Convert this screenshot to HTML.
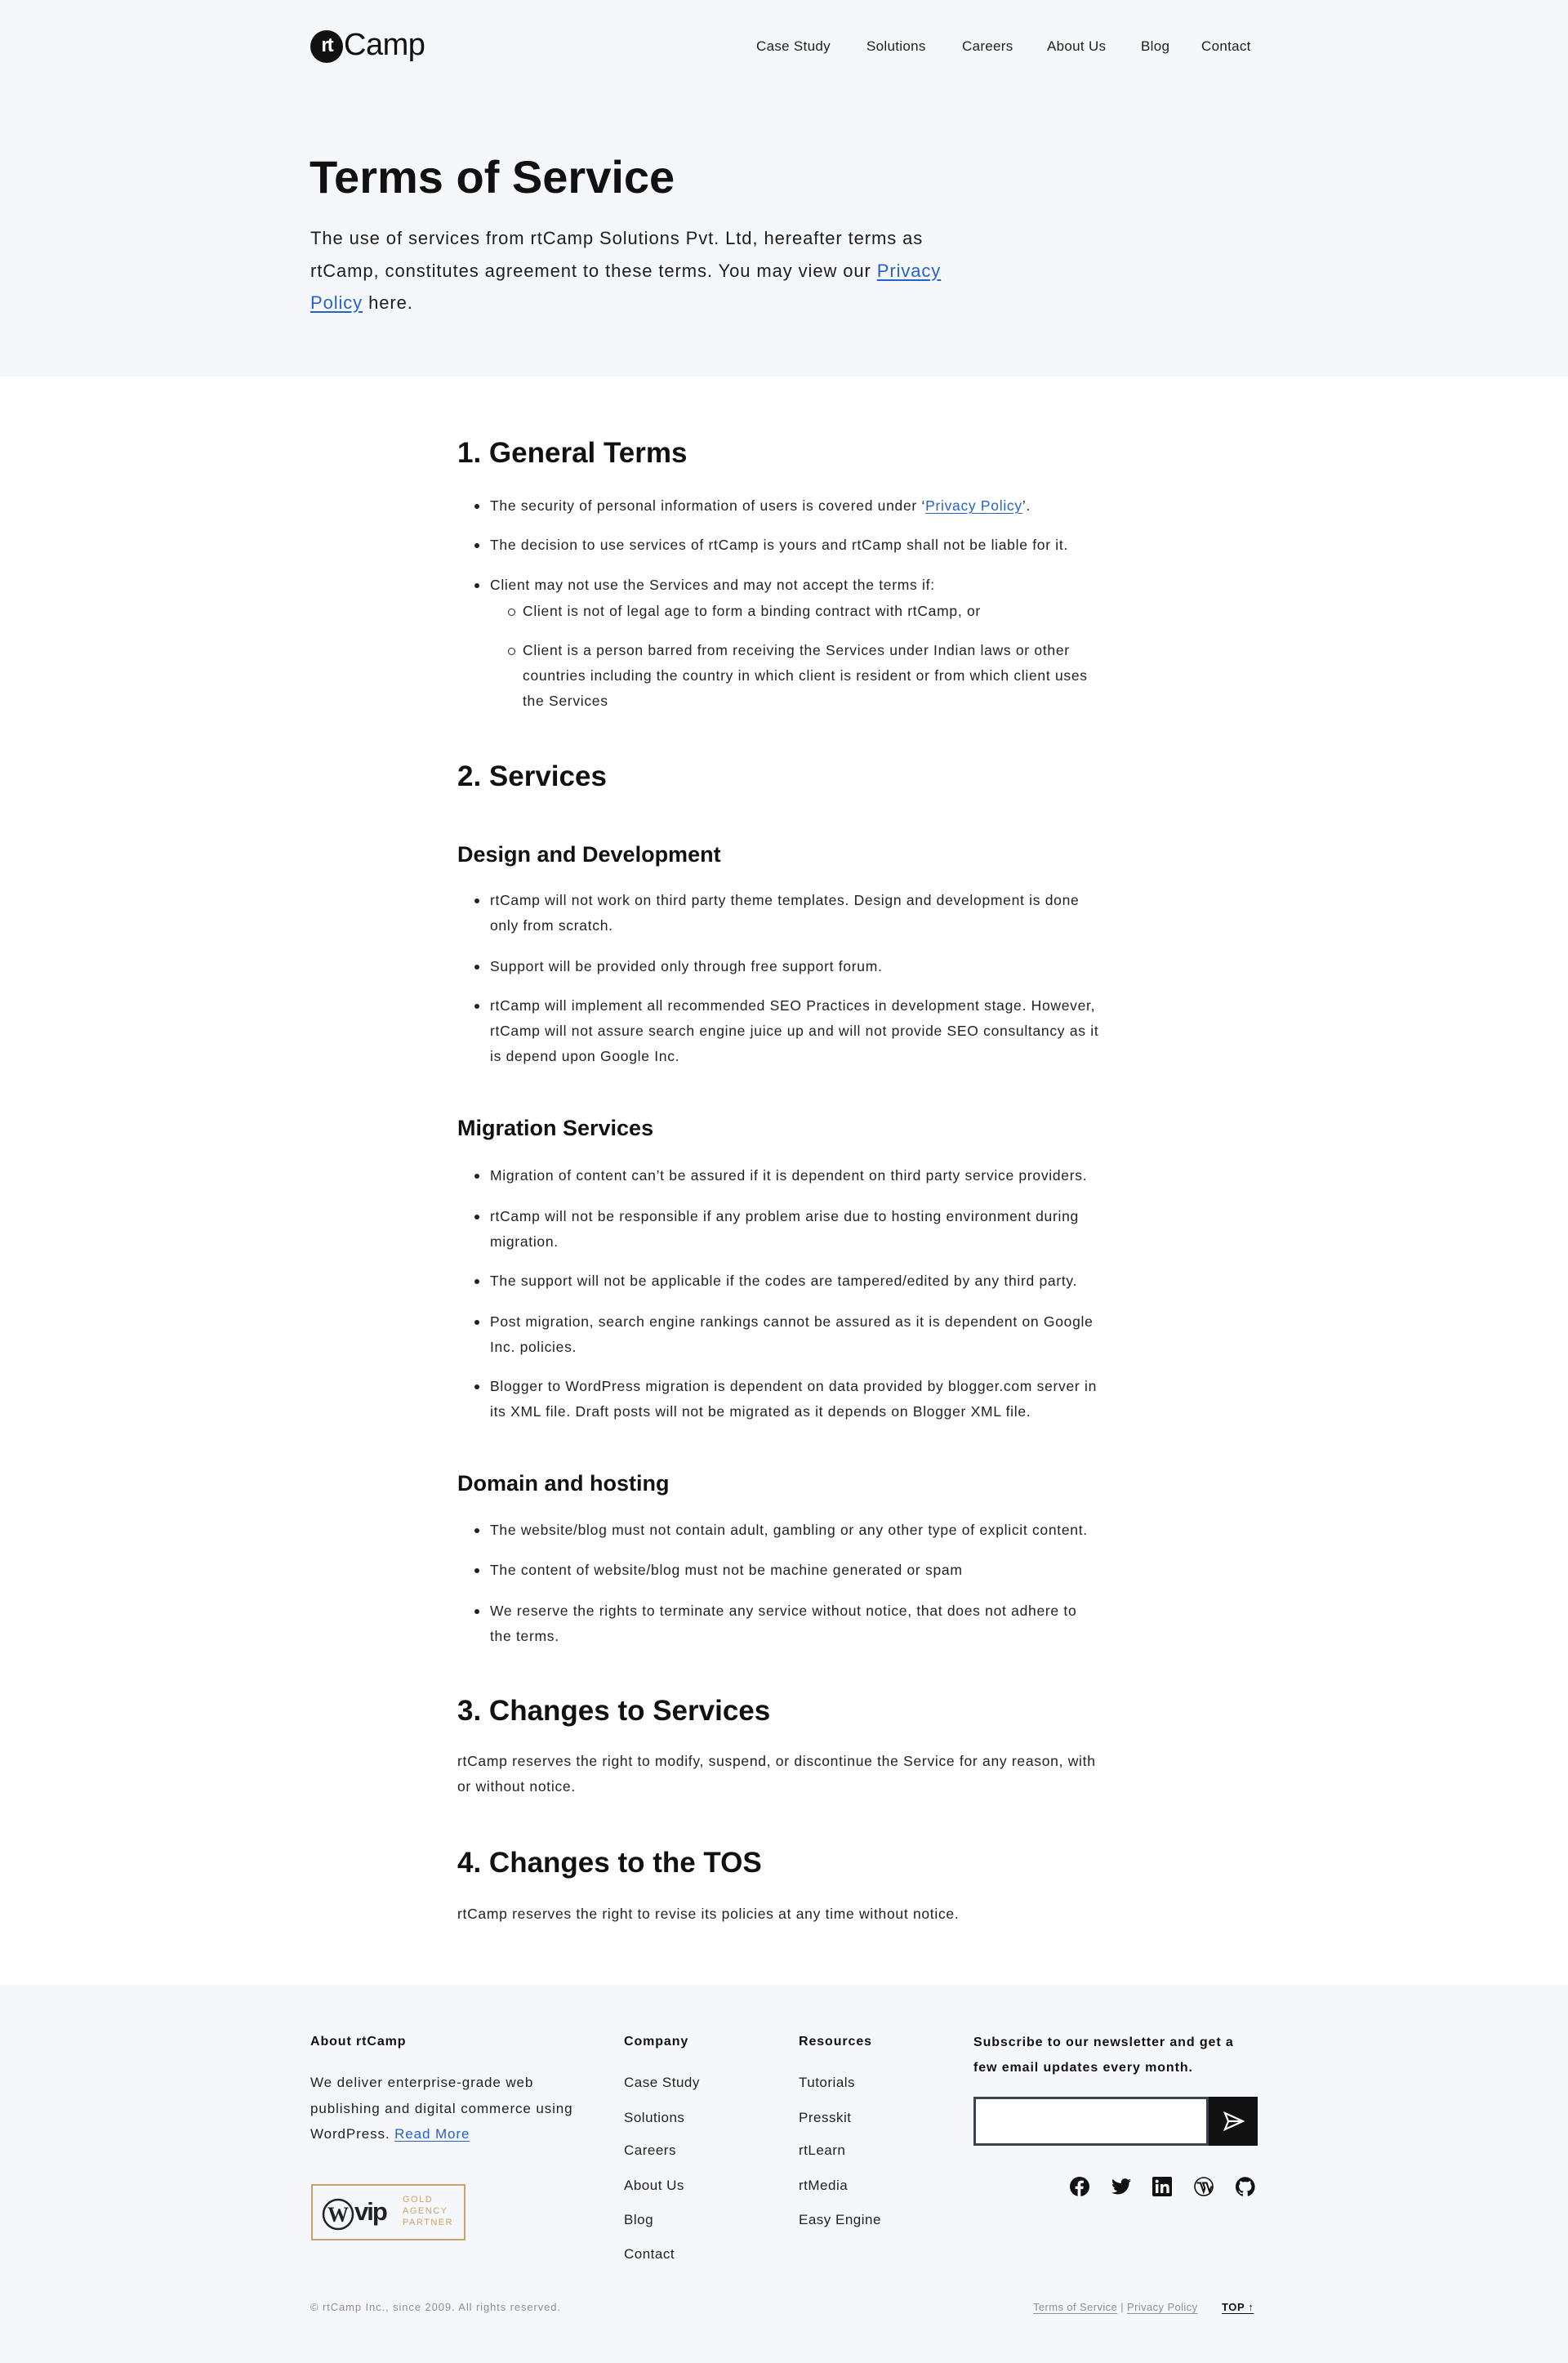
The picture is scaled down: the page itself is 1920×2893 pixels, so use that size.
<!DOCTYPE html>
<html><head><meta charset="utf-8">
<style>
*{margin:0;padding:0;box-sizing:border-box}
body{width:1920px;height:2893px;position:relative;background:#fff;font-family:"Liberation Sans",Arial,sans-serif;color:#1e1e1e;overflow:hidden}
.a{position:absolute;white-space:nowrap}
.hero{position:absolute;left:0;top:0;width:1920px;height:461px;background:#f6f7fa}
.foot{position:absolute;left:0;top:2430px;width:1920px;height:463px;background:#f6f7fa}
.nav{font-size:17px;line-height:20px;top:47px;letter-spacing:0.3px}
a{color:#2463c9;text-decoration:underline;text-underline-offset:3px}
.t{font-size:17.5px;line-height:31px;color:#222;letter-spacing:0.7px}
.b::before{content:"";position:absolute;left:-19px;top:13px;width:6px;height:6px;border-radius:50%;background:#222}
.c::before{content:"";position:absolute;left:-18px;top:12px;width:7px;height:7px;border-radius:50%;border:1.3px solid #222}
h2{position:absolute;font-size:35px;line-height:40px;font-weight:bold;color:#111;white-space:nowrap}
h3{position:absolute;font-size:27px;line-height:32px;font-weight:bold;color:#111;white-space:nowrap}
.fh{font-size:16px;font-weight:bold;line-height:20px;color:#111;letter-spacing:0.9px}
.fl{font-size:17px;line-height:20px;color:#222;letter-spacing:0.5px}
</style></head><body>
<div class="hero"></div>
<div class="foot"></div>

<div class="a" style="left:380px;top:37px;width:40px;height:40px;border-radius:50%;background:#111;color:#fff;font-size:24px;line-height:38px;text-align:center;letter-spacing:-2px;font-weight:bold">rt</div>
<div class="a" style="left:421px;top:32px;font-size:38px;line-height:46px;color:#111;letter-spacing:-0.5px">Camp</div>

<div class="a nav" style="left:926px">Case Study</div>
<div class="a nav" style="left:1061px">Solutions</div>
<div class="a nav" style="left:1178px">Careers</div>
<div class="a nav" style="left:1282px">About Us</div>
<div class="a nav" style="left:1397px">Blog</div>
<div class="a nav" style="left:1471px">Contact</div>

<div class="a" style="left:379px;top:184px;font-size:56px;line-height:66px;font-weight:bold;color:#111;letter-spacing:0px">Terms of Service</div>
<div class="a" style="left:380px;top:272px;font-size:22px;line-height:39.5px;color:#1e1e1e;letter-spacing:0.9px">The use of services from rtCamp Solutions Pvt. Ltd, hereafter terms as<br>rtCamp, constitutes agreement to these terms. You may view our <a href="#">Privacy</a><br><a href="#">Policy</a> here.</div>

<h2 style="left:560px;top:535px">1. General Terms</h2>
<div class="a t b" style="left:600px;top:604px">The security of personal information of users is covered under ‘<a href="#">Privacy Policy</a>’.</div>
<div class="a t b" style="left:600px;top:652px">The decision to use services of rtCamp is yours and rtCamp shall not be liable for it.</div>
<div class="a t b" style="left:600px;top:701px">Client may not use the Services and may not accept the terms if:</div>
<div class="a t c" style="left:640px;top:733px">Client is not of legal age to form a binding contract with rtCamp, or</div>
<div class="a t c" style="left:640px;top:781px">Client is a person barred from receiving the Services under Indian laws or other<br>countries including the country in which client is resident or from which client uses<br>the Services</div>

<h2 style="left:560px;top:931px">2. Services</h2>
<h3 style="left:560px;top:1030px">Design and Development</h3>
<div class="a t b" style="left:600px;top:1087px">rtCamp will not work on third party theme templates. Design and development is done<br>only from scratch.</div>
<div class="a t b" style="left:600px;top:1168px">Support will be provided only through free support forum.</div>
<div class="a t b" style="left:600px;top:1216px">rtCamp will implement all recommended SEO Practices in development stage. However,<br>rtCamp will not assure search engine juice up and will not provide SEO consultancy as it<br>is depend upon Google Inc.</div>

<h3 style="left:560px;top:1365px">Migration Services</h3>
<div class="a t b" style="left:600px;top:1424px">Migration of content can’t be assured if it is dependent on third party service providers.</div>
<div class="a t b" style="left:600px;top:1474px">rtCamp will not be responsible if any problem arise due to hosting environment during<br>migration.</div>
<div class="a t b" style="left:600px;top:1553px">The support will not be applicable if the codes are tampered/edited by any third party.</div>
<div class="a t b" style="left:600px;top:1603px">Post migration, search engine rankings cannot be assured as it is dependent on Google<br>Inc. policies.</div>
<div class="a t b" style="left:600px;top:1682px">Blogger to WordPress migration is dependent on data provided by blogger.com server in<br>its XML file. Draft posts will not be migrated as it depends on Blogger XML file.</div>

<h3 style="left:560px;top:1800px">Domain and hosting</h3>
<div class="a t b" style="left:600px;top:1858px">The website/blog must not contain adult, gambling or any other type of explicit content.</div>
<div class="a t b" style="left:600px;top:1907px">The content of website/blog must not be machine generated or spam</div>
<div class="a t b" style="left:600px;top:1957px">We reserve the rights to terminate any service without notice, that does not adhere to<br>the terms.</div>

<h2 style="left:560px;top:2075px">3. Changes to Services</h2>
<div class="a t" style="left:560px;top:2141px">rtCamp reserves the right to modify, suspend, or discontinue the Service for any reason, with<br>or without notice.</div>
<h2 style="left:560px;top:2261px">4. Changes to the TOS</h2>
<div class="a t" style="left:560px;top:2328px">rtCamp reserves the right to revise its policies at any time without notice.</div>

<div class="a fh" style="left:380px;top:2490px">About rtCamp</div>
<div class="a fh" style="left:764px;top:2490px">Company</div>
<div class="a fh" style="left:978px;top:2490px">Resources</div>
<div class="a fh" style="left:1192px;top:2485px;line-height:31px">Subscribe to our newsletter and get a<br>few email updates every month.</div>
<div class="a" style="left:380px;top:2534px;font-size:17px;line-height:31.5px;color:#222;letter-spacing:0.9px">We deliver enterprise-grade web<br>publishing and digital commerce using<br>WordPress. <a href="#">Read More</a></div>

<div class="a" style="left:381px;top:2674px;width:189px;height:69px;border:2px solid #c9a36b;background:#f6f7fa">
  <svg class="a" style="left:11px;top:15px" width="40" height="40" viewBox="0 0 40 40"><circle cx="20" cy="20" r="18" fill="none" stroke="#1d2327" stroke-width="2.5"/><text x="20" y="29" text-anchor="middle" font-family="Liberation Serif" font-weight="bold" font-size="26" fill="#1d2327">W</text></svg>
  <div class="a" style="left:51px;top:14px;font-size:31px;font-weight:bold;color:#1d2327;letter-spacing:-2px;line-height:36px">vip</div>
  <div class="a" style="left:110px;top:10px;font-size:11px;line-height:14px;letter-spacing:1.5px;color:#c9a36b">GOLD<br>AGENCY<br>PARTNER</div>
</div>

<div class="a fl" style="left:764px;top:2540px">Case Study</div>
<div class="a fl" style="left:764px;top:2583px">Solutions</div>
<div class="a fl" style="left:764px;top:2623px">Careers</div>
<div class="a fl" style="left:764px;top:2666px">About Us</div>
<div class="a fl" style="left:764px;top:2708px">Blog</div>
<div class="a fl" style="left:764px;top:2750px">Contact</div>
<div class="a fl" style="left:978px;top:2540px">Tutorials</div>
<div class="a fl" style="left:978px;top:2583px">Presskit</div>
<div class="a fl" style="left:978px;top:2623px">rtLearn</div>
<div class="a fl" style="left:978px;top:2666px">rtMedia</div>
<div class="a fl" style="left:978px;top:2708px">Easy Engine</div>

<div class="a" style="left:1192px;top:2567px;width:288px;height:60px;border:3px solid #3c434a;background:#fff"></div>
<div class="a" style="left:1480px;top:2567px;width:60px;height:60px;background:#111">
  <svg class="a" style="left:18px;top:18px" width="26" height="24" viewBox="0 0 26 24"><path d="M2 2 L24 12 L2 22 L6 12 Z M6 12 H24" fill="none" stroke="#fff" stroke-width="2.2" stroke-linejoin="miter"/></svg>
</div>

<svg class="a" style="left:1310px;top:2665px" width="24" height="24" viewBox="0 0 24 24"><circle cx="12" cy="12" r="12" fill="#111"/><path d="M13.3 24V15h3l.5-3.4h-3.5V9.4c0-1 .3-1.6 1.7-1.6h1.9V4.8c-.3 0-1.5-.2-2.8-.2-2.7 0-4.5 1.7-4.5 4.6v2.4H6.6V15h3v9z" fill="#f6f7fa"/></svg>
<svg class="a" style="left:1361px;top:2666px" width="24" height="22" viewBox="0 0 24 20"><path d="M24 2.4c-.9.4-1.8.6-2.8.8 1-.6 1.8-1.600 2.2-2.7-1 .6-2 1-3.1 1.2A4.9 4.9 0 0 0 11.9 6 14 14 0 0 1 1.7.9a4.9 4.9 0 0 0 1.5 6.6c-.8 0-1.6-.3-2.2-.6 0 2.4 1.7 4.4 3.9 4.8-.7.2-1.5.2-2.2.1.6 2 2.4 3.4 4.6 3.4A9.9 9.9 0 0 1 0 17.3 14 14 0 0 0 7.5 19.5c9.1 0 14-7.5 14-14v-.6c1-.7 1.8-1.6 2.5-2.5z" fill="#111"/></svg>
<svg class="a" style="left:1411px;top:2665px" width="24" height="24" viewBox="0 0 24 24"><rect width="24" height="24" rx="2" fill="#111"/><rect x="4" y="9" width="3.4" height="11" fill="#f6f7fa"/><circle cx="5.7" cy="5.6" r="2" fill="#f6f7fa"/><path d="M10 9h3.2v1.6c.5-.9 1.6-1.9 3.4-1.9 3.5 0 4.1 2.3 4.1 5.2V20h-3.4v-5.3c0-1.3 0-2.9-1.8-2.9s-2.1 1.4-2.1 2.8V20H10z" fill="#f6f7fa"/></svg>
<svg class="a" style="left:1462px;top:2665px" width="24" height="24" viewBox="0 0 24 24"><circle cx="12" cy="12" r="11" fill="none" stroke="#111" stroke-width="1.6"/><path d="M3.5 7.5h4.5l3.8 11 1.5-4.4-2.3-6.6h4.5l3.7 10.9 2.4-7" fill="none" stroke="#111" stroke-width="2"/></svg>
<svg class="a" style="left:1513px;top:2665px" width="24" height="24" viewBox="0 0 24 24"><path d="M12 .3a12 12 0 0 0-3.8 23.4c.6.1.8-.3.8-.6v-2c-3.3.7-4-1.6-4-1.6-.6-1.4-1.4-1.8-1.4-1.800-1-.7.1-.7.1-.7 1.2.1 1.8 1.2 1.8 1.2 1.1 1.8 2.8 1.3 3.5 1 0-.8.4-1.3.7-1.6-2.700-.3-5.5-1.3-5.5-6 0-1.2.5-2.3 1.3-3.1-.2-.4-.6-1.6 0-3.2 0 0 1-.3 3.3 1.2a11.5 11.5 0 0 1 6 0c2.3-1.5 3.3-1.2 3.3-1.2.6 1.6.2 2.8.1 3.2.8.8 1.3 1.9 1.3 3.1 0 4.6-2.8 5.6-5.5 5.9.4.4.8 1.1.8 2.2v3.3c0 .3.2.7.8.6A12 12 0 0 0 12 .3" fill="#111"/></svg>

<div class="a" style="left:380px;top:2817px;font-size:13px;line-height:16px;color:#8a8f98;letter-spacing:0.9px">© rtCamp Inc., since 2009. All rights reserved.</div>
<div class="a" style="left:1265px;top:2817px;font-size:13px;line-height:16px;color:#8a8f98;letter-spacing:0.4px"><span style="text-decoration:underline;text-underline-offset:3px">Terms of Service</span> | <span style="text-decoration:underline;text-underline-offset:3px">Privacy Policy</span></div>
<div class="a" style="left:1496px;top:2817px;font-size:13px;line-height:16px;color:#111;font-weight:bold;letter-spacing:0.6px;text-decoration:underline;text-underline-offset:3px">TOP ↑</div>
</body></html>
